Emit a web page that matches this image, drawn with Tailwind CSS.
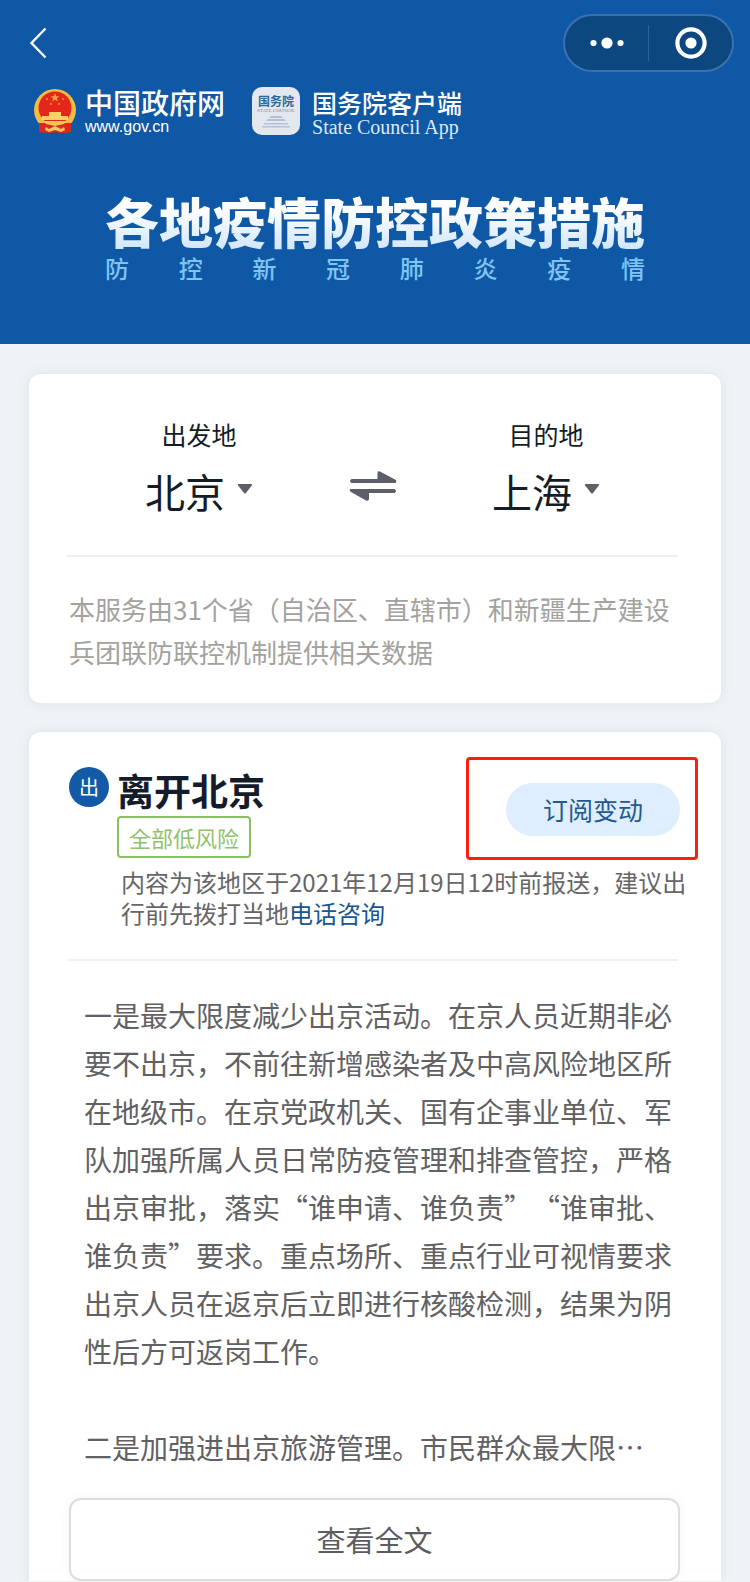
<!DOCTYPE html>
<html lang="zh-CN">
<head>
  <meta charset="UTF-8">
  <meta name="viewport" content="width=device-width, initial-scale=1.0">
  <title>各地疫情防控政策措施</title>
  <script src="https://cdn.jsdelivr.net/npm/@tailwindcss/browser@4"></script>
</head>
<body class="bg-[#eff3f8] font-['Noto_Sans_CJK_SC',sans-serif] [text-spacing-trim:space-all]">
  <header class="bg-[#0f58a5] pb-[60px]">
    <!-- nav bar -->
    <div class="flex items-center justify-between pt-[14px] pl-[28px] pr-4">
      <button aria-label="返回">
        <svg class="w-5 h-8" viewBox="0 0 20 32" fill="none" stroke="#fff" stroke-width="2.4"><path d="M17.5 1.5 3.5 16l14 14.5"/></svg>
      </button>
      <div class="flex items-center h-[58px] w-[171px] rounded-full border-2 border-[#3871ae] bg-[#0d477f]">
        <button class="flex-1 flex justify-center" aria-label="更多">
          <svg class="w-9 h-3" viewBox="0 0 36 12" fill="#fff"><circle cx="4.5" cy="6" r="3.1"/><circle cx="18" cy="6" r="5.6"/><circle cx="31.5" cy="6" r="3.1"/></svg>
        </button>
        <span class="w-px h-9 bg-[#2d639b]"></span>
        <button class="flex-1 flex justify-center" aria-label="关闭">
          <svg class="w-8 h-8" viewBox="0 0 32 32"><circle cx="16" cy="16" r="13.6" fill="none" stroke="#fff" stroke-width="4.2"/><circle cx="16" cy="16" r="5.6" fill="#fff"/></svg>
        </button>
      </div>
    </div>

    <!-- logos -->
    <div class="flex items-center gap-[27px] pt-[14px] pl-[33px] text-white">
      <a href="#" class="flex items-center gap-2">
        <svg class="w-11 h-12" viewBox="0 0 44 48">
          <path d="M6 33h32v12l-10 1-6-1-6 1-10-1z" fill="#d8261c"/>
          <circle cx="22" cy="23" r="21" fill="#f3bd45"/>
          <circle cx="22" cy="21" r="16.500" fill="#e5261b"/>
          <path d="m22 6 1.200 3.200h3.200l-2.600 2 1 3.300-2.800-2-2.800 2 1-3.300-2.600-2h3.200z" fill="#f7a044"/>
          <g fill="#ef7a35"><circle cx="14" cy="12" r="1.200"/><circle cx="30" cy="12" r="1.200"/><circle cx="18" cy="17" r="1.200"/><circle cx="26" cy="17" r="1.200"/></g>
          <path d="M16 25h12v4h7v4H9v-4h7z" fill="#fad163"/>
          <path d="M6 36h32v9l-9 1-7-1-7 1-9-1z" fill="#dc281d"/>
          <path d="M11 34h22l-2 3-9 2-9-2z" fill="#f6c551"/>
          <path d="m16 42 6-3 6 3 3-2 1 3-4 2-6-2-6 2-4-2 1-3z" fill="#f7c956"/>
        </svg>
        <span class="flex flex-col">
          <span class="text-[28px] leading-8 font-medium">中国政府网</span>
          <span class="text-base leading-[18px] font-['Liberation_Sans',sans-serif]">www.gov.cn</span>
        </span>
      </a>
      <a href="#" class="flex items-center gap-3">
        <svg class="w-12 h-12" viewBox="0 0 48 48">
          <rect width="48" height="48" rx="10" fill="#e3e8f0"/>
          <text x="24" y="19" text-anchor="middle" font-size="12" font-weight="700" fill="#2b6a9c">国务院</text>
          <text x="24" y="25" text-anchor="middle" font-size="5" fill="#7d8794" font-family="Liberation Serif">STATE COUNCIL</text>
          <g fill="#b3c0d6"><path d="M19 29h10l2 2H17zM16 32h16l2 2H14zM12 36h24v1.500H12zM10 39h28v1.500H10z"/></g>
        </svg>
        <span class="flex flex-col">
          <span class="text-[25px] leading-8 font-medium">国务院客户端</span>
          <span class="text-xl leading-[18px] text-[#dceafa] font-['Liberation_Serif',serif]">State Council App</span>
        </span>
      </a>
    </div>

    <!-- title -->
    <div class="mx-auto w-fit pt-[54px]">
      <h1 class="text-[54px] leading-[62px] font-black bg-linear-to-b from-white from-30% to-[#cfe5fb] bg-clip-text text-transparent">各地疫情防控政策措施</h1>
      <p class="flex justify-between text-2xl leading-8 font-medium text-[#7fc4f5]">
        <span>防</span><span>控</span><span>新</span><span>冠</span><span>肺</span><span>炎</span><span>疫</span><span>情</span>
      </p>
    </div>
  </header>

  <main class="flex flex-col gap-[29px] pt-[30px] px-[29px]">
    <!-- route picker -->
    <section class="bg-white rounded-xl shadow-[0_0_12px_rgba(90,110,120,0.12)] pl-[38px] pr-[43px] pb-[30px]">
      <div class="flex items-center justify-between px-[78px] pt-10 pb-[37px] text-[#141c26]">
        <div class="flex flex-col items-center">
          <label for="from" class="text-[25px] leading-10">出发地</label>
          <div class="flex items-center gap-3 pt-[10px]">
            <select id="from" class="appearance-none bg-transparent w-20 h-[54px] text-[40px] leading-[54px]">
              <option>北京</option>
              <option>上海</option>
            </select>
            <svg class="w-4 h-4" viewBox="0 0 16 16" fill="#5d5f66"><path d="M1.500 1h13q1 .4.4 1.300L9 10q-1 1-2 0L1 2.300Q.5 1.400 1.500 1z"/></svg>
          </div>
        </div>
        <button class="pt-10" aria-label="互换">
          <svg class="w-12 h-8" viewBox="0 0 48 32" fill="#5d5f68"><path d="M2.500 9H28.500V2.500q.5-2 2.500-1L46 9.500q2.500 1.500.5 3.500h-44q-3-2 0-4zM45.500 19H20v10q-.5 2.500-3 1.500L2 22q-2.500-1.500-.5-3h44q3 2 0 4H20v-4z"/></svg>
        </button>
        <div class="flex flex-col items-center">
          <label for="to" class="text-[25px] leading-10">目的地</label>
          <div class="flex items-center gap-3 pt-[10px]">
            <select id="to" class="appearance-none bg-transparent w-20 h-[54px] text-[40px] leading-[54px]">
              <option>上海</option>
              <option>北京</option>
            </select>
            <svg class="w-4 h-4" viewBox="0 0 16 16" fill="#5d5f66"><path d="M1.500 1h13q1 .4.4 1.300L9 10q-1 1-2 0L1 2.300Q.5 1.400 1.500 1z"/></svg>
          </div>
        </div>
      </div>
      <hr class="border-t-2 border-[#efefef]">
      <p class="pt-[30px] pl-[2px] text-[26px] leading-[43px] text-[#a3a29e]">本服务由31个省（自治区、直辖市）和新疆生产建设兵团联防联控机制提供相关数据</p>
    </section>

    <!-- departure policy -->
    <section class="bg-white rounded-t-xl shadow-[0_0_12px_rgba(90,110,120,0.12)] pt-[35px] px-[38px]">
      <div class="flex justify-between">
        <div class="flex gap-2 pl-[2px]">
          <span class="flex items-center justify-center size-10 rounded-full bg-[#125aa5] text-white text-xl">出</span>
          <div>
            <h2 class="text-[37px] leading-[46px] font-bold text-[#141c2b]">离开北京</h2>
            <span class="block w-fit mt-[3px] rounded-sm border-2 border-[#8bbf65] px-[10px] text-[22px] leading-[38px] text-[#8fc268]">全部低风险</span>
          </div>
        </div>
        <div class="relative self-start mt-4 mr-[3px]">
          <button class="block w-[174px] h-[53px] rounded-full bg-[#deeeff] text-[25px] text-[#22598f]">订阅变动</button>
          <!-- highlight frame -->
          <div class="absolute -top-[26px] -left-10 -right-[18px] -bottom-6 border-3 border-[#ff1c10] rounded pointer-events-none"></div>
        </div>
      </div>
      <p class="-mr-2 pt-2 pl-[54px] pb-[31px] text-2xl leading-[31px] text-[#666]">内容为该地区于2021年12月19日12时前报送，建议出行前先拨打当地<a href="#" class="text-[#17568f]">电话咨询</a></p>
      <hr class="mr-[5px] border-t-2 border-[#f1f1f1]">
      <div class="pt-[30px] pl-[17px] text-[28px] leading-[48px] text-[#616164]">
        <p>一是最大限度减少出京活动。在京人员近期非必要不出京，不前往新增感染者及中高风险地区所在地级市。在京党政机关、国有企事业单位、军队加强所属人员日常防疫管理和排查管控，严格出京审批，落实“谁申请、谁负责”“谁审批、谁负责”要求。重点场所、重点行业可视情要求出京人员在返京后立即进行核酸检测，结果为阴性后方可返岗工作。</p>
        <p class="pt-12">二是加强进出京旅游管理。市民群众最大限…</p>
      </div>
      <div class="pt-[27px] pl-[2px] pr-[3px]">
        <button class="block w-full h-[83px] rounded-xl border-2 border-[#dadedf] shadow-[0_0_8px_rgba(90,110,120,0.08)] text-[29px] text-[#5c5c5e]">查看全文</button>
      </div>
    </section>
  </main>
</body>
</html>
